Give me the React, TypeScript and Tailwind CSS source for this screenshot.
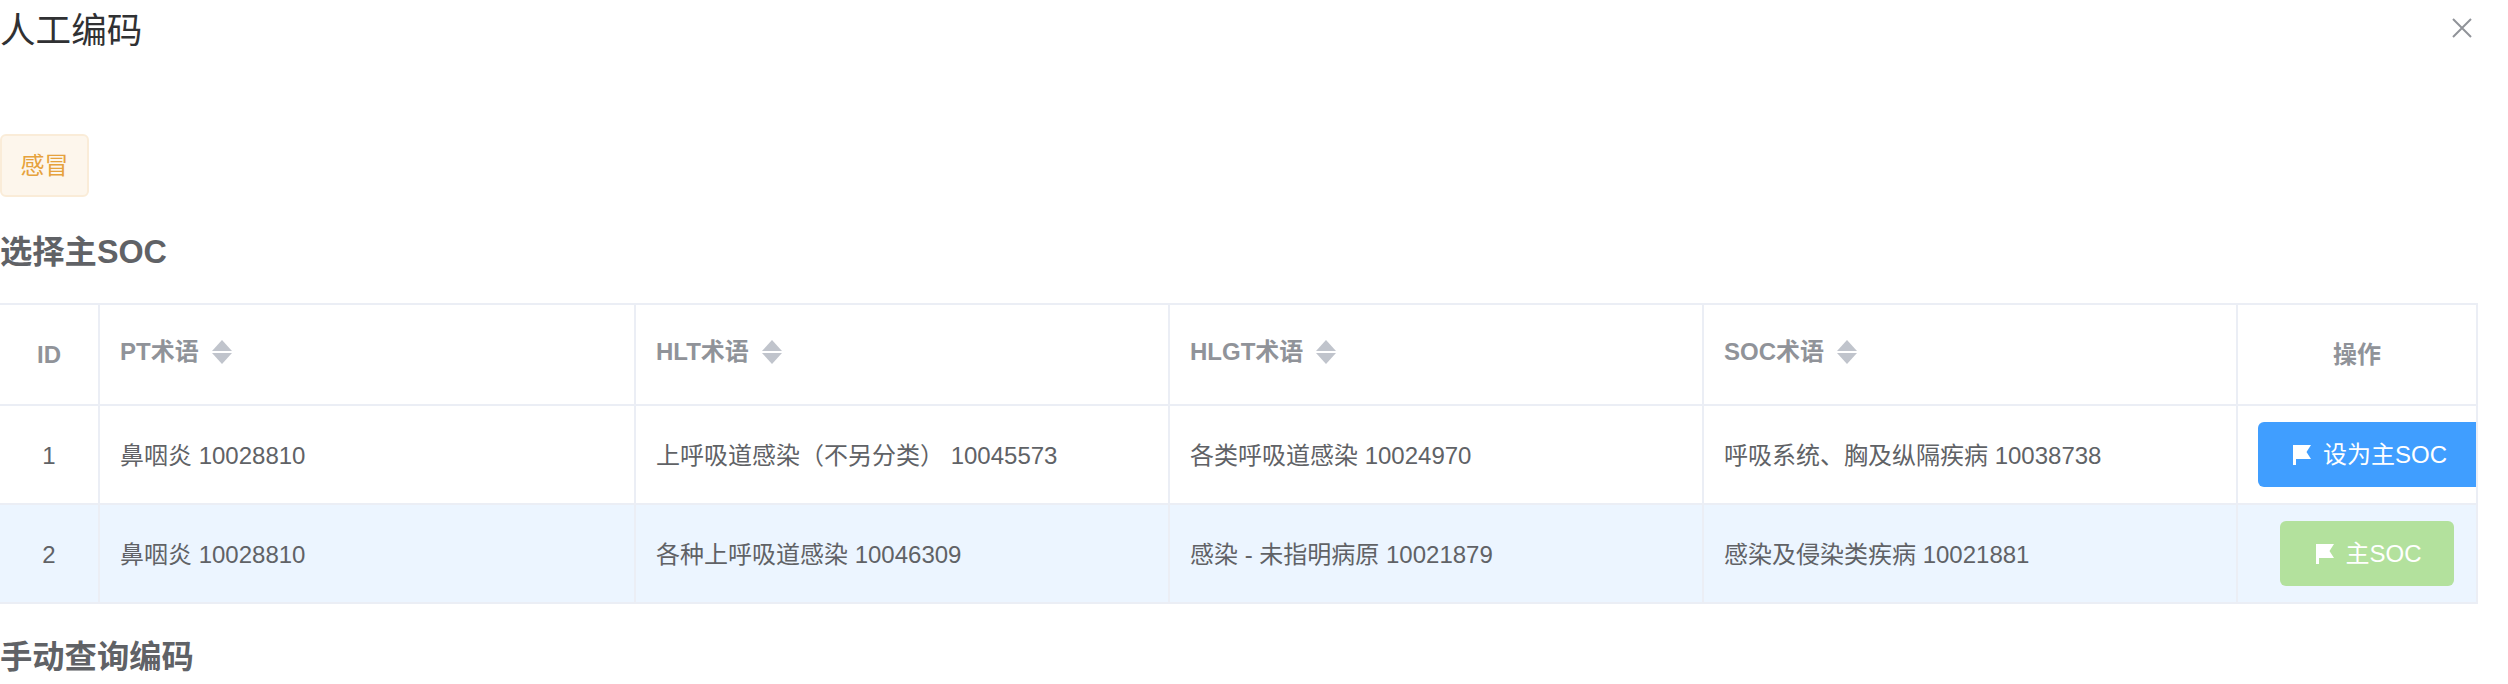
const rows = [
  {
    id: 1,
    pt: "鼻咽炎 10028810",
    hlt: "上呼吸道感染（不另分类） 10045573",
    hlgt: "各类呼吸道感染 10024970",
    soc: "呼吸系统、胸及纵隔疾病 10038738",
    main: false,
  },
  {
    id: 2,
    pt: "鼻咽炎 10028810",
    hlt: "各种上呼吸道感染 10046309",
    hlgt: "感染 - 未指明病原 10021879",
    soc: "感染及侵染类疾病 10021881",
    main: true,
  },
]

const SortCaret = () => (
  <svg width="20" height="24" viewBox="0 0 20 24" className="ml-[13px] shrink-0 fill-[#c0c4cc]">
    <polygon points="10,0 20,11 0,11" />
    <polygon points="0,13 20,13 10,24" />
  </svg>
)

const Flag = () => (
  <svg width="18" height="20" viewBox="0 0 18 20" className="shrink-0 fill-white">
    <path d="M0 0h18l-4.500 7 4.500 7H3v6H0z" />
  </svg>
)

const SortHead = ({ label }: { label: string }) => (
  <th className="border-t-2 border-r-2 border-b-2 border-[#ebeef5] pl-[20px] text-left font-bold">
    <div className="flex items-center -mt-[5px]">
      {label}
      <SortCaret />
    </div>
  </th>
)

const Cell = ({ text }: { text: string }) => (
  <td className="border-r-2 border-b-2 border-[#ebeef5] pt-[2px] pl-[20px] whitespace-nowrap">{text}</td>
)

export default function App() {
  return (
    <div className="w-[2508px] h-[684px] overflow-hidden bg-white font-['Liberation_Sans','Noto_Sans_CJK_SC',sans-serif]">
      <div className="flex h-[62px] items-center justify-between pr-[36px]">
        <h1 className="mt-[1px] text-[35.6px] leading-none text-[#303133]">人工编码</h1>
        <svg width="20" height="20" viewBox="0 0 20 20" className="-mt-[6px] stroke-[#909399] stroke-2">
          <path d="M1 1l18 18M19 1L1 19" />
        </svg>
      </div>

      <div className="mt-[72px] flex h-[63px] w-[89px] items-center justify-center rounded-[6px] border-2 border-[#faecd8] bg-[#fdf6ec] text-[24px] text-[#e6a23c]">
        感冒
      </div>

      <h2 className="mt-[31px] mb-[27px] h-[48px] text-[32.3px] leading-[48px] font-bold text-[#606266]">选择主SOC</h2>

      <table className="w-[2478px] table-fixed border-separate border-spacing-0 text-[24px] text-[#606266]">
        <colgroup>
          <col className="w-[100px]" />
          <col className="w-[536px]" />
          <col className="w-[534px]" />
          <col className="w-[534px]" />
          <col className="w-[534px]" />
          <col className="w-[240px]" />
        </colgroup>
        <thead>
          <tr className="h-[103px] text-[#909399]">
            <th className="border-t-2 border-r-2 border-b-2 border-[#ebeef5] font-bold">ID</th>
            {["PT术语", "HLT术语", "HLGT术语", "SOC术语"].map((label) => (
              <SortHead key={label} label={label} />
            ))}
            <th className="border-t-2 border-r-2 border-b-2 border-[#ebeef5] font-bold">操作</th>
          </tr>
        </thead>
        <tbody>
          {rows.map((row) => (
            <tr key={row.id} className={row.main ? "h-[99px] bg-[#ecf5ff]" : "h-[99px]"}>
              <td className="border-r-2 border-b-2 border-[#ebeef5] pt-[2px] text-center">{row.id}</td>
              {[row.pt, row.hlt, row.hlgt, row.soc].map((text) => (
                <Cell key={text} text={text} />
              ))}
              <td className="overflow-hidden border-r-2 border-b-2 border-[#ebeef5] pl-[20px]">
                {row.main ? (
                  <div className="flex justify-center">
                    <div className="flex h-[65px] w-[174px] items-center justify-center gap-[11px] rounded-[6px] bg-[#b3e19d] pl-[4px] text-white">
                      <Flag />
                      主SOC
                    </div>
                  </div>
                ) : (
                  <div className="flex h-[65px] w-[224px] items-center justify-center gap-[12px] rounded-[6px] bg-[#409eff] text-white">
                    <Flag />
                    设为主SOC
                  </div>
                )}
              </td>
            </tr>
          ))}
        </tbody>
      </table>

      <h2 className="mt-[29px] h-[48px] text-[32.3px] leading-[48px] font-bold text-[#606266]">手动查询编码</h2>
    </div>
  )
}
